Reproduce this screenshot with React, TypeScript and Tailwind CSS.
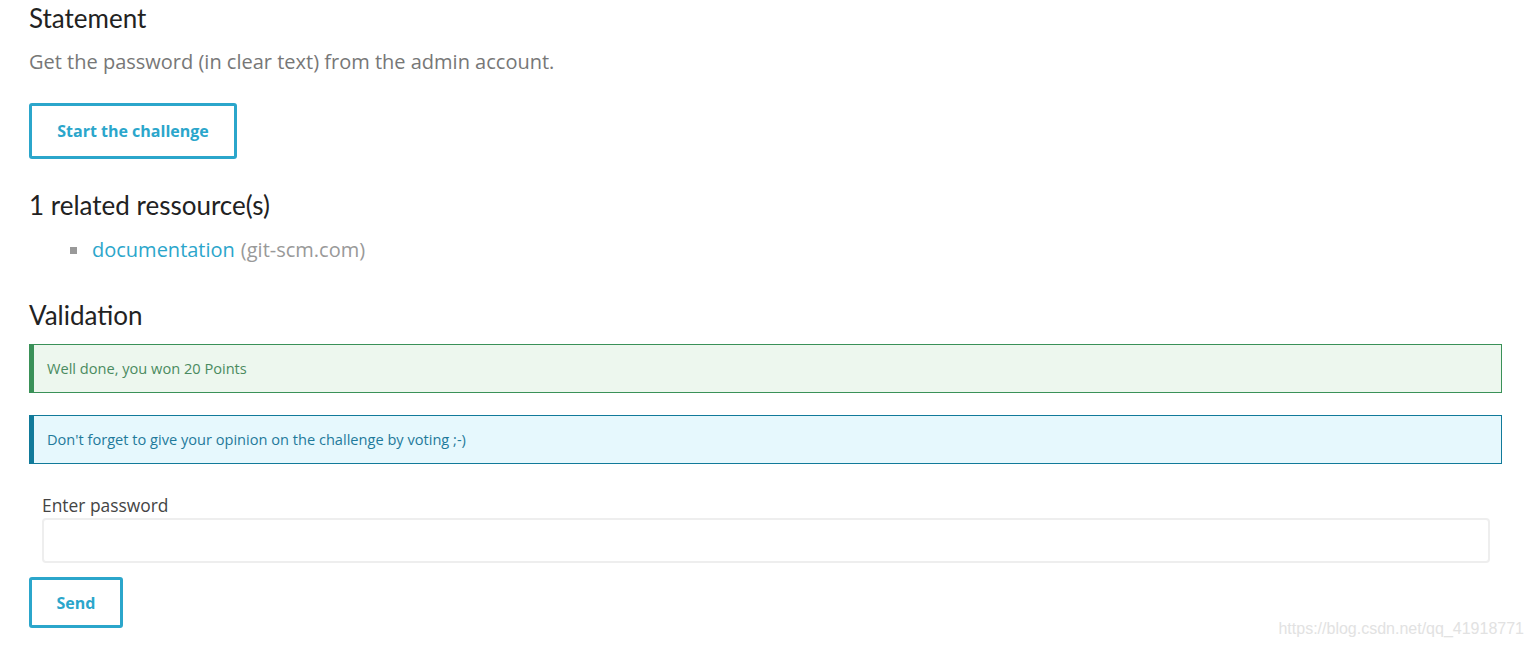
export default function App() {
  return (
    <div className="relative min-h-screen bg-white font-['Open_Sans',sans-serif] text-[#444]">
      <div className="pl-[29px] pr-[28px] pt-[2px]">
        <h2 className="font-['Lato',sans-serif] text-[26px] leading-[32px] text-[#222]">
          Statement
        </h2>
        <p className="mt-[14px] text-[20px] leading-[28px] text-[#777]">
          Get the password (in clear text) from the admin account.
        </p>
        <button className="mt-[27px] h-[56px] w-[208px] rounded-[3px] border-[3px] border-[#2ba6cb] text-[16px] font-bold text-[#2ba6cb]">
          Start the challenge
        </button>

        <h2 className="mt-[30px] font-['Lato',sans-serif] text-[26px] leading-[32px] text-[#222]">
          1 related ressource(s)
        </h2>
        <ul className="mt-[16px] pl-[41px]">
          <li className="flex items-center text-[20px] leading-[26px]">
            <span className="mr-[15px] h-[7px] w-[7px] bg-[#999]" />
            <a className="text-[#2ba6cb]">documentation</a>
            <span className="ml-[6px] text-[#999]">(git-scm.com)</span>
          </li>
        </ul>

        <h2 className="mt-[36px] font-['Lato',sans-serif] text-[26px] leading-[32px] text-[#222]">
          Validation
        </h2>

        <div className="mt-[13px] flex h-[49px] items-center border border-l-[5px] border-[#3a9158] bg-[#edf7ee] pl-[13px] text-[14.6px] text-[#4a8b60]">
          Well done, you won 20 Points
        </div>
        <div className="mt-[22px] flex h-[49px] items-center border border-l-[5px] border-[#117a9a] bg-[#e6f8fd] pl-[13px] text-[14.6px] text-[#1f7a9b]">
          Don't forget to give your opinion on the challenge by voting ;-)
        </div>

        <div className="mt-[30px] pl-[13px] pr-[12px]">
          <label className="block text-[17.4px] leading-[22px] text-[#444]">Enter password</label>
          <input
            type="password"
            className="mt-[2px] block h-[45px] w-full rounded-[4px] border-2 border-[#eee] outline-none"
          />
        </div>
        <button className="mt-[14px] h-[51px] w-[94px] rounded-[3px] border-[3px] border-[#2ba6cb] text-[16px] font-bold text-[#2ba6cb]">
          Send
        </button>
      </div>
      <div className="absolute right-[6px] top-[617px] font-['Liberation_Sans',sans-serif] text-[16px] text-[#e2e2e2]">
        https://blog.csdn.net/qq_41918771
      </div>
    </div>
  );
}
